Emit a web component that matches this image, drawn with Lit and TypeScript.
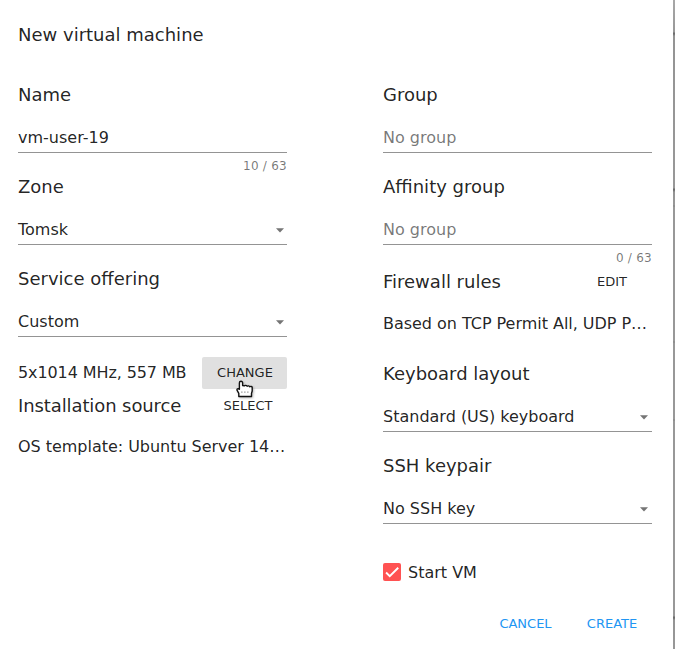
import { LitElement, html, css } from "lit";
import { customElement } from "lit/decorators.js";

@customElement("app-root")
export class AppRoot extends LitElement {
  static styles = css`
    :host { display: block; }
    * { box-sizing: border-box; }
    .page { display: grid; grid-template-columns: 673px 2px; width: 675px; height: 649px; overflow: hidden; }
    .backdrop { background: linear-gradient(#a8a8a8 0, #989898 32px, #6e6e6e 33px, #6e6e6e 34px, #949494 36px, #989898 188px, #6c6c6c 189px, #6c6c6c 190px, #949494 192px, #989898 205px, #858585 206px, #989898 207px, #989898 341px, #858585 342px, #989898 343px, #989898 419px, #858585 420px, #989898 421px, #989898 616px, #6c6c6c 617px, #6c6c6c 618px, #949494 620px, #989898); }
    .dialog { background: #fff; font: 16px/28px "DejaVu Sans", sans-serif; color: rgba(0,0,0,.87);
      padding: 21px 21px 0 18px; white-space: nowrap; }
    .title { font-size: 18px; height: 60px; }
    .cols { display: flex; justify-content: space-between; height: 527px; }
    .col { width: 269px; }
    .heading { font-size: 18px; height: 28px; display: flex; justify-content: space-between; align-items: center; }
    .tight { letter-spacing: -.1px; }
    .field { height: 29px; margin-top: 15px; border-bottom: 1px solid #949494; display: flex; justify-content: space-between; }
    .placeholder { color: rgba(0,0,0,.54); }
    .hint { height: 20px; font-size: 12px; line-height: 26px; letter-spacing: .25px; text-align: right; color: rgba(0,0,0,.54); }
    .hint.tall { height: 23px; }
    .arrow { width: 10px; height: 5px; margin: 12px 2px 0 0; }
    .col.right .arrow { margin-right: 3px; }
    .row { display: flex; justify-content: space-between; align-items: center; height: 32px; margin: 20px 0 3px; }
    .btn { position: relative; font-size: 13px; line-height: 32px; height: 32px; width: 85px; text-align: center; border-radius: 2px; letter-spacing: 0; }
    .btn.hover { background: #e0e0e0; padding-left: 1px; }
    .btn.narrow { width: 78px; }
    .col.right .btn { margin-right: 1px; }
    .cursor { position: absolute; left: 34px; top: 23px; width: 18px; height: 18px; z-index: 1; filter: drop-shadow(1px 1px 1px rgba(0,0,0,.25)); }
    .text { margin-top: 13px; letter-spacing: -.03px; }
    .text.rules { margin: 14px 0 22px; }
    .check { display: flex; align-items: center; gap: 7px; margin-top: 34px; }
    .check span:last-child { padding-top: 2px; height: 28px; line-height: 26px; }
    .box { width: 18px; height: 18px; border-radius: 2px; background: #ff5252; }
    .box svg { display: block; }
    .actions { display: flex; justify-content: flex-end; gap: 5px; padding-right: 1px; color: #2196f3; }
  `;

  private arrow() {
    return html`<svg class="arrow" viewBox="0 0 10 5"><path d="M1 .3h8L5 4.5z" fill="#757575"/></svg>`;
  }

  private select(label: string, value: string) {
    return html`<div class="heading">${label}</div><div class="field"><span>${value}</span>${this.arrow()}</div>`;
  }

  private input(label: string, value: string, hint: string, kind = "", tall = "") {
    return html`<div class="heading">${label}</div><div class="field ${kind}">${value}</div><div class="hint ${tall}">${hint}</div>`;
  }

  render() {
    return html`<div class="page">
      <div class="dialog">
        <div class="title">New virtual machine</div>
        <div class="cols">
          <div class="col">
            ${this.input("Name", "vm-user-19", "10 / 63")}
            ${this.select("Zone", "Tomsk")}
            <div class="hint"></div>
            ${this.select("Service offering", "Custom")}
            <div class="row"><span class="tight">5x1014 MHz, 557 MB</span>
              <div class="btn hover">CHANGE
                <svg class="cursor" viewBox="0 0 18 18"><path d="M5 1.2c-1 0-1.6.7-1.6 1.7v6.4L2.3 8.7C1.4 8.5.8 9.2 1 10.2l1.8 3.1v3.2h12.7v-3.1l.7-2.4V7.4c0-1-1.7-1.3-2.4-.6-.5-.9-1.9-1.2-2.7-.6-.7-1-2.1-1-2.9-.3L6.6 5.5V2.9C6.6 1.9 6 1.2 5 1.2z" fill="#fff" stroke="#111" stroke-width="1.4" stroke-linejoin="round"/><path d="M5.2 12.1h1.3m1.7 0h1.3m1.7 0h1.3" stroke="#777"/></svg>
              </div>
            </div>
            <div class="heading tight">Installation source<div class="btn narrow">SELECT</div></div>
            <div class="text">OS template: Ubuntu Server 14…</div>
          </div>
          <div class="col right">
            ${this.input("Group", "No group", "", "placeholder")}
            ${this.input("Affinity group", "No group", "0 / 63", "placeholder", "tall")}
            <div class="heading">Firewall rules<div class="btn narrow">EDIT</div></div>
            <div class="text rules">Based on TCP Permit All, UDP P…</div>
            ${this.select("Keyboard layout", "Standard (US) keyboard")}
            <div class="hint"></div>
            ${this.select("SSH keypair", "No SSH key")}
            <div class="check"><span class="box"><svg width="18" height="18" viewBox="0 0 24 24"><path d="M4.1 12.7 9 17.6 20.3 6.3" fill="none" stroke="#fff" stroke-width="2.5"/></svg></span><span>Start VM</span></div>
          </div>
        </div>
        <div class="actions"><div class="btn">CANCEL</div><div class="btn narrow">CREATE</div></div>
      </div>
      <div class="backdrop"></div>
    </div>`;
  }
}
